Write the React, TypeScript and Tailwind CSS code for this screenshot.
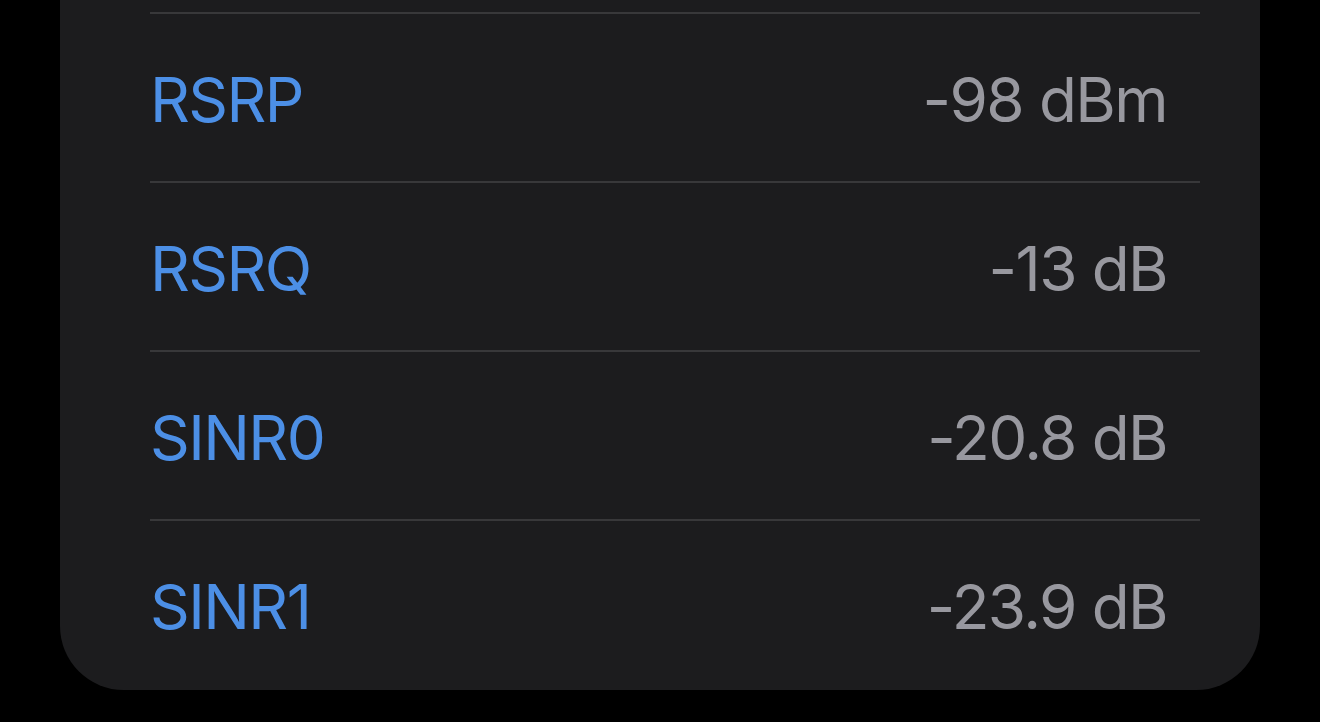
const rows = [
  { label: "RSRP", value: "-98 dBm" },
  { label: "RSRQ", value: "-13 dB" },
  { label: "SINR0", value: "-20.8 dB" },
  { label: "SINR1", value: "-23.9 dB" },
];

export default function App() {
  return (
    <div
      className="h-[722px] w-[1320px] overflow-hidden bg-black px-[60px]"
      style={{ fontFamily: "Inter, 'Noto Sans', sans-serif" }}
    >
      <div className="rounded-b-[64px] bg-[#1c1c1e] pl-[90px] pr-[60px]">
        <div className="h-[12px]" />
        {rows.map((r) => (
          <div key={r.label}>
            <div className="h-[2px] bg-[#38383a]" />
            <div className="flex h-[167px] items-center justify-between pr-[33px] pt-[5px] text-[62px] leading-none tracking-[-1.6px]">
              <span className="text-[#4c8fe6]">{r.label}</span>
              <span className="text-[#98989f]">{r.value}</span>
            </div>
          </div>
        ))}
        <div className="h-[2px]" />
      </div>
    </div>
  );
}
